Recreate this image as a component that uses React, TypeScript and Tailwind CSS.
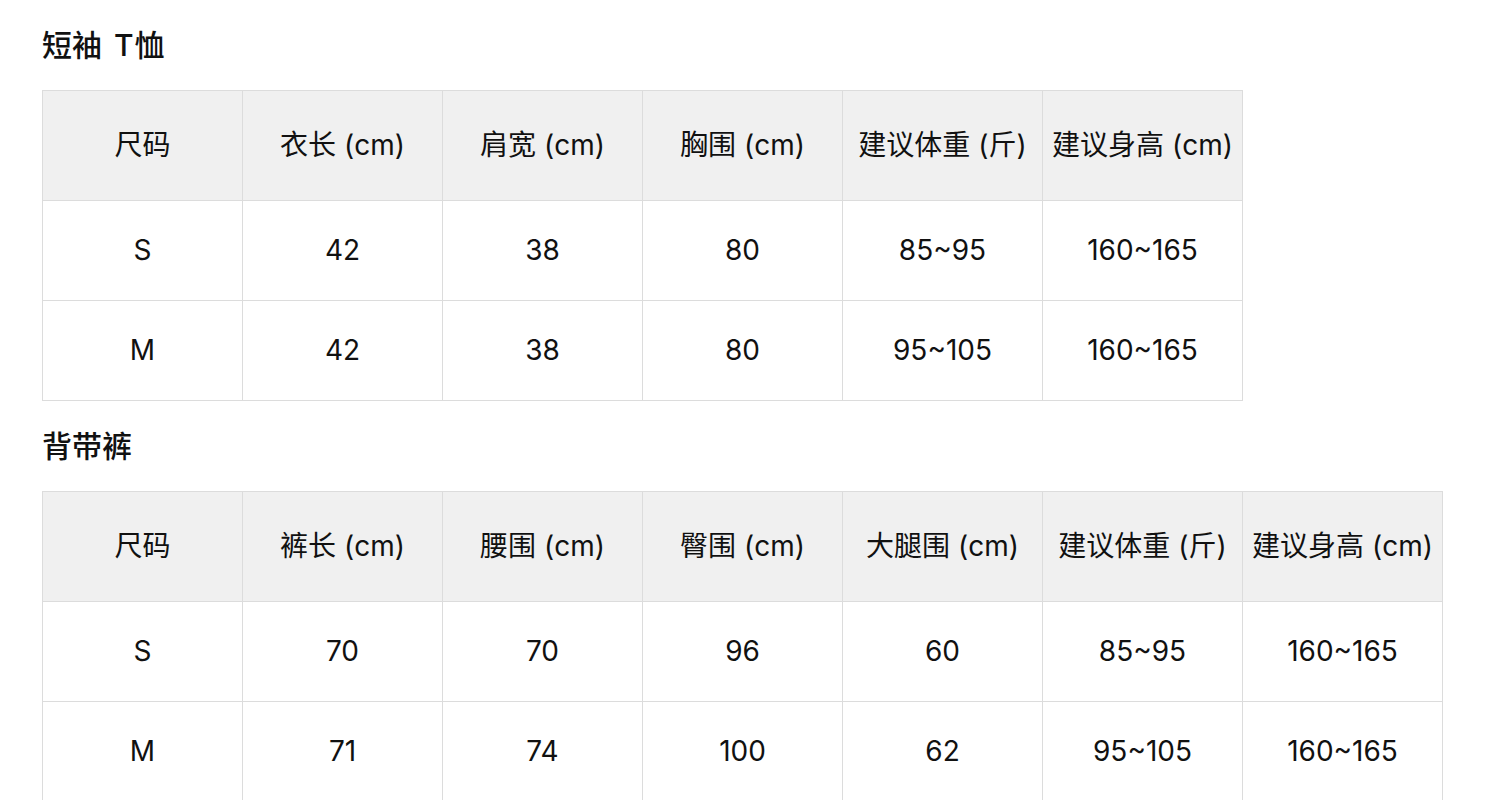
import React from 'react';

const shirtHead = ['尺码', '衣长 (cm)', '肩宽 (cm)', '胸围 (cm)', '建议体重 (斤)', '建议身高 (cm)'];
const shirtRows = [
    ['S', '42', '38', '80', '85~95', '160~165'],
    ['M', '42', '38', '80', '95~105', '160~165'],
];

const pantsHead = ['尺码', '裤长 (cm)', '腰围 (cm)', '臀围 (cm)', '大腿围 (cm)', '建议体重 (斤)', '建议身高 (cm)'];
const pantsRows = [
    ['S', '70', '70', '96', '60', '85~95', '160~165'],
    ['M', '71', '74', '100', '62', '95~105', '160~165'],
];

const SizeTable = ({ head, rows }: { head: string[]; rows: string[][] }) => (
    <table className="border-collapse table-fixed">
        <thead>
            <tr>
                {head.map((h, i) => (
                    <th key={i} className="w-[200px] h-[110px] p-0 bg-[#f0f0f0] border border-[#dcdcdc] font-normal text-center whitespace-nowrap">
                        {h}
                    </th>
                ))}
            </tr>
        </thead>
        <tbody>
            {rows.map((r, i) => (
                <tr key={i}>
                    {r.map((c, j) => (
                        <td key={j} className="w-[200px] h-[100px] p-0 border border-[#dcdcdc] text-center">
                            {c}
                        </td>
                    ))}
                </tr>
            ))}
        </tbody>
    </table>
);

const App = () => {
    return (
        <div className="min-h-screen bg-white pl-[42px] text-[#111] text-[28px] leading-[1.2] font-['Inter','Noto_Sans_CJK_SC',sans-serif]">
            <h2 className="h-[90px] flex items-center text-[30px] font-medium">
                短袖<span className="ml-[12px] mr-[1px]">T</span>恤
            </h2>
            <SizeTable head={shirtHead} rows={shirtRows} />
            <h2 className="h-[90px] flex items-center text-[30px] font-medium">背带裤</h2>
            <SizeTable head={pantsHead} rows={pantsRows} />
        </div>
    );
};

export default App;
